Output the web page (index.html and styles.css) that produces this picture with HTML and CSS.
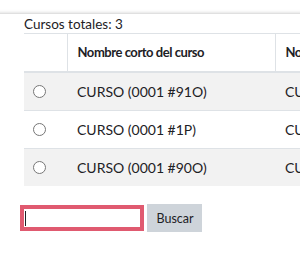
FILE: index.html
```html
<!DOCTYPE html>
<html lang="es">
<head>
  <meta charset="UTF-8">
  <title>Buscar cursos</title>
  <link rel="stylesheet" href="styles.css">
</head>
<body>
  <div class="panel">
    <div class="total">Cursos totales: 3</div>
    <table class="cursos">
      <colgroup>
        <col class="col-sel">
        <col class="col-corto">
        <col class="col-largo">
      </colgroup>
      <thead>
        <tr>
          <th></th>
          <th>Nombre corto del curso</th>
          <th>Nombre completo del curso</th>
        </tr>
      </thead>
      <tbody>
        <tr class="par">
          <td><input type="radio" name="curso"></td>
          <td>CURSO (0001 #91O)</td>
          <td>CURSO (0001 #91O)</td>
        </tr>
        <tr>
          <td><input type="radio" name="curso"></td>
          <td>CURSO (0001 #1P)</td>
          <td>CURSO (0001 #1P)</td>
        </tr>
        <tr class="par">
          <td><input type="radio" name="curso"></td>
          <td>CURSO (0001 #90O)</td>
          <td>CURSO (0001 #90O)</td>
        </tr>
      </tbody>
    </table>
    <form class="buscar">
      <span class="campo"><input type="text" class="campo-texto"></span>
      <button type="button" class="btn-buscar">Buscar</button>
    </form>
  </div>
</body>
</html>
```

FILE: styles.css
```css
body {
  margin: 0;
  overflow: hidden;
  background: #fff;
  font-family: 'Lato', sans-serif;
  font-size: 14px;
  color: #1d2125;
}

.panel {
  margin: 14px 0 0 -10px;
  width: 340px;
  padding: 0 0 0 34px;
  background: #fff;
  box-shadow: 0 0 4px rgba(0,0,0,0.3);
}

.total {
  font-size: 13.5px;
  line-height: 18px;
  padding-top: 1px;
}

.cursos {
  border-collapse: collapse;
  table-layout: fixed;
  width: 276px;
}

.col-sel { width: 43px; }
.col-corto { width: 208px; }
.col-largo { width: 25px; }

.cursos th {
  text-align: left;
  font-size: 13px;
  letter-spacing: -0.45px;
  font-weight: bold;
  white-space: nowrap;
  overflow: hidden;
  padding: 7px 0 7px 10px;
  line-height: 23px;
  border-top: 1px solid #dee2e6;
  border-bottom: 2px solid #dee2e6;
  border-left: 1px solid #dee2e6;
}

.cursos th:first-child {
  border-left: none;
}

.cursos td {
  white-space: nowrap;
  overflow: hidden;
  padding: 7px 0 7px 9px;
  line-height: 23px;
  border-top: 1px solid #dee2e6;
}

.cursos td + td {
  padding-left: 10px;
}

.cursos tr.par td {
  background: #f2f2f2;
}

.cursos input[type="radio"] {
  margin: 0;
  width: 13px;
  height: 13px;
  vertical-align: -1px;
}

.buscar {
  display: flex;
  align-items: center;
  margin-top: 18px;
}

.campo {
  position: relative;
  display: block;
  margin-left: -1px;
}

.campo::after {
  content: "";
  position: absolute;
  left: 2px;
  top: 3px;
  width: 1px;
  height: 15px;
  background: #1d2125;
}

.campo-texto {
  display: block;
  box-sizing: border-box;
  width: 118px;
  height: 20px;
  margin: 0;
  padding: 0 4px;
  border: 1px solid #e05a70;
  box-shadow: 0 0 0 3px #e05a70;
  outline: none;
  font-family: inherit;
}

.btn-buscar {
  margin-left: 6px;
  height: 28px;
  width: 55px;
  padding: 0 0 0 1px;
  border: none;
  background: #ced4da;
  color: #1d2125;
  font-family: inherit;
  font-size: 12.5px;
}
```
